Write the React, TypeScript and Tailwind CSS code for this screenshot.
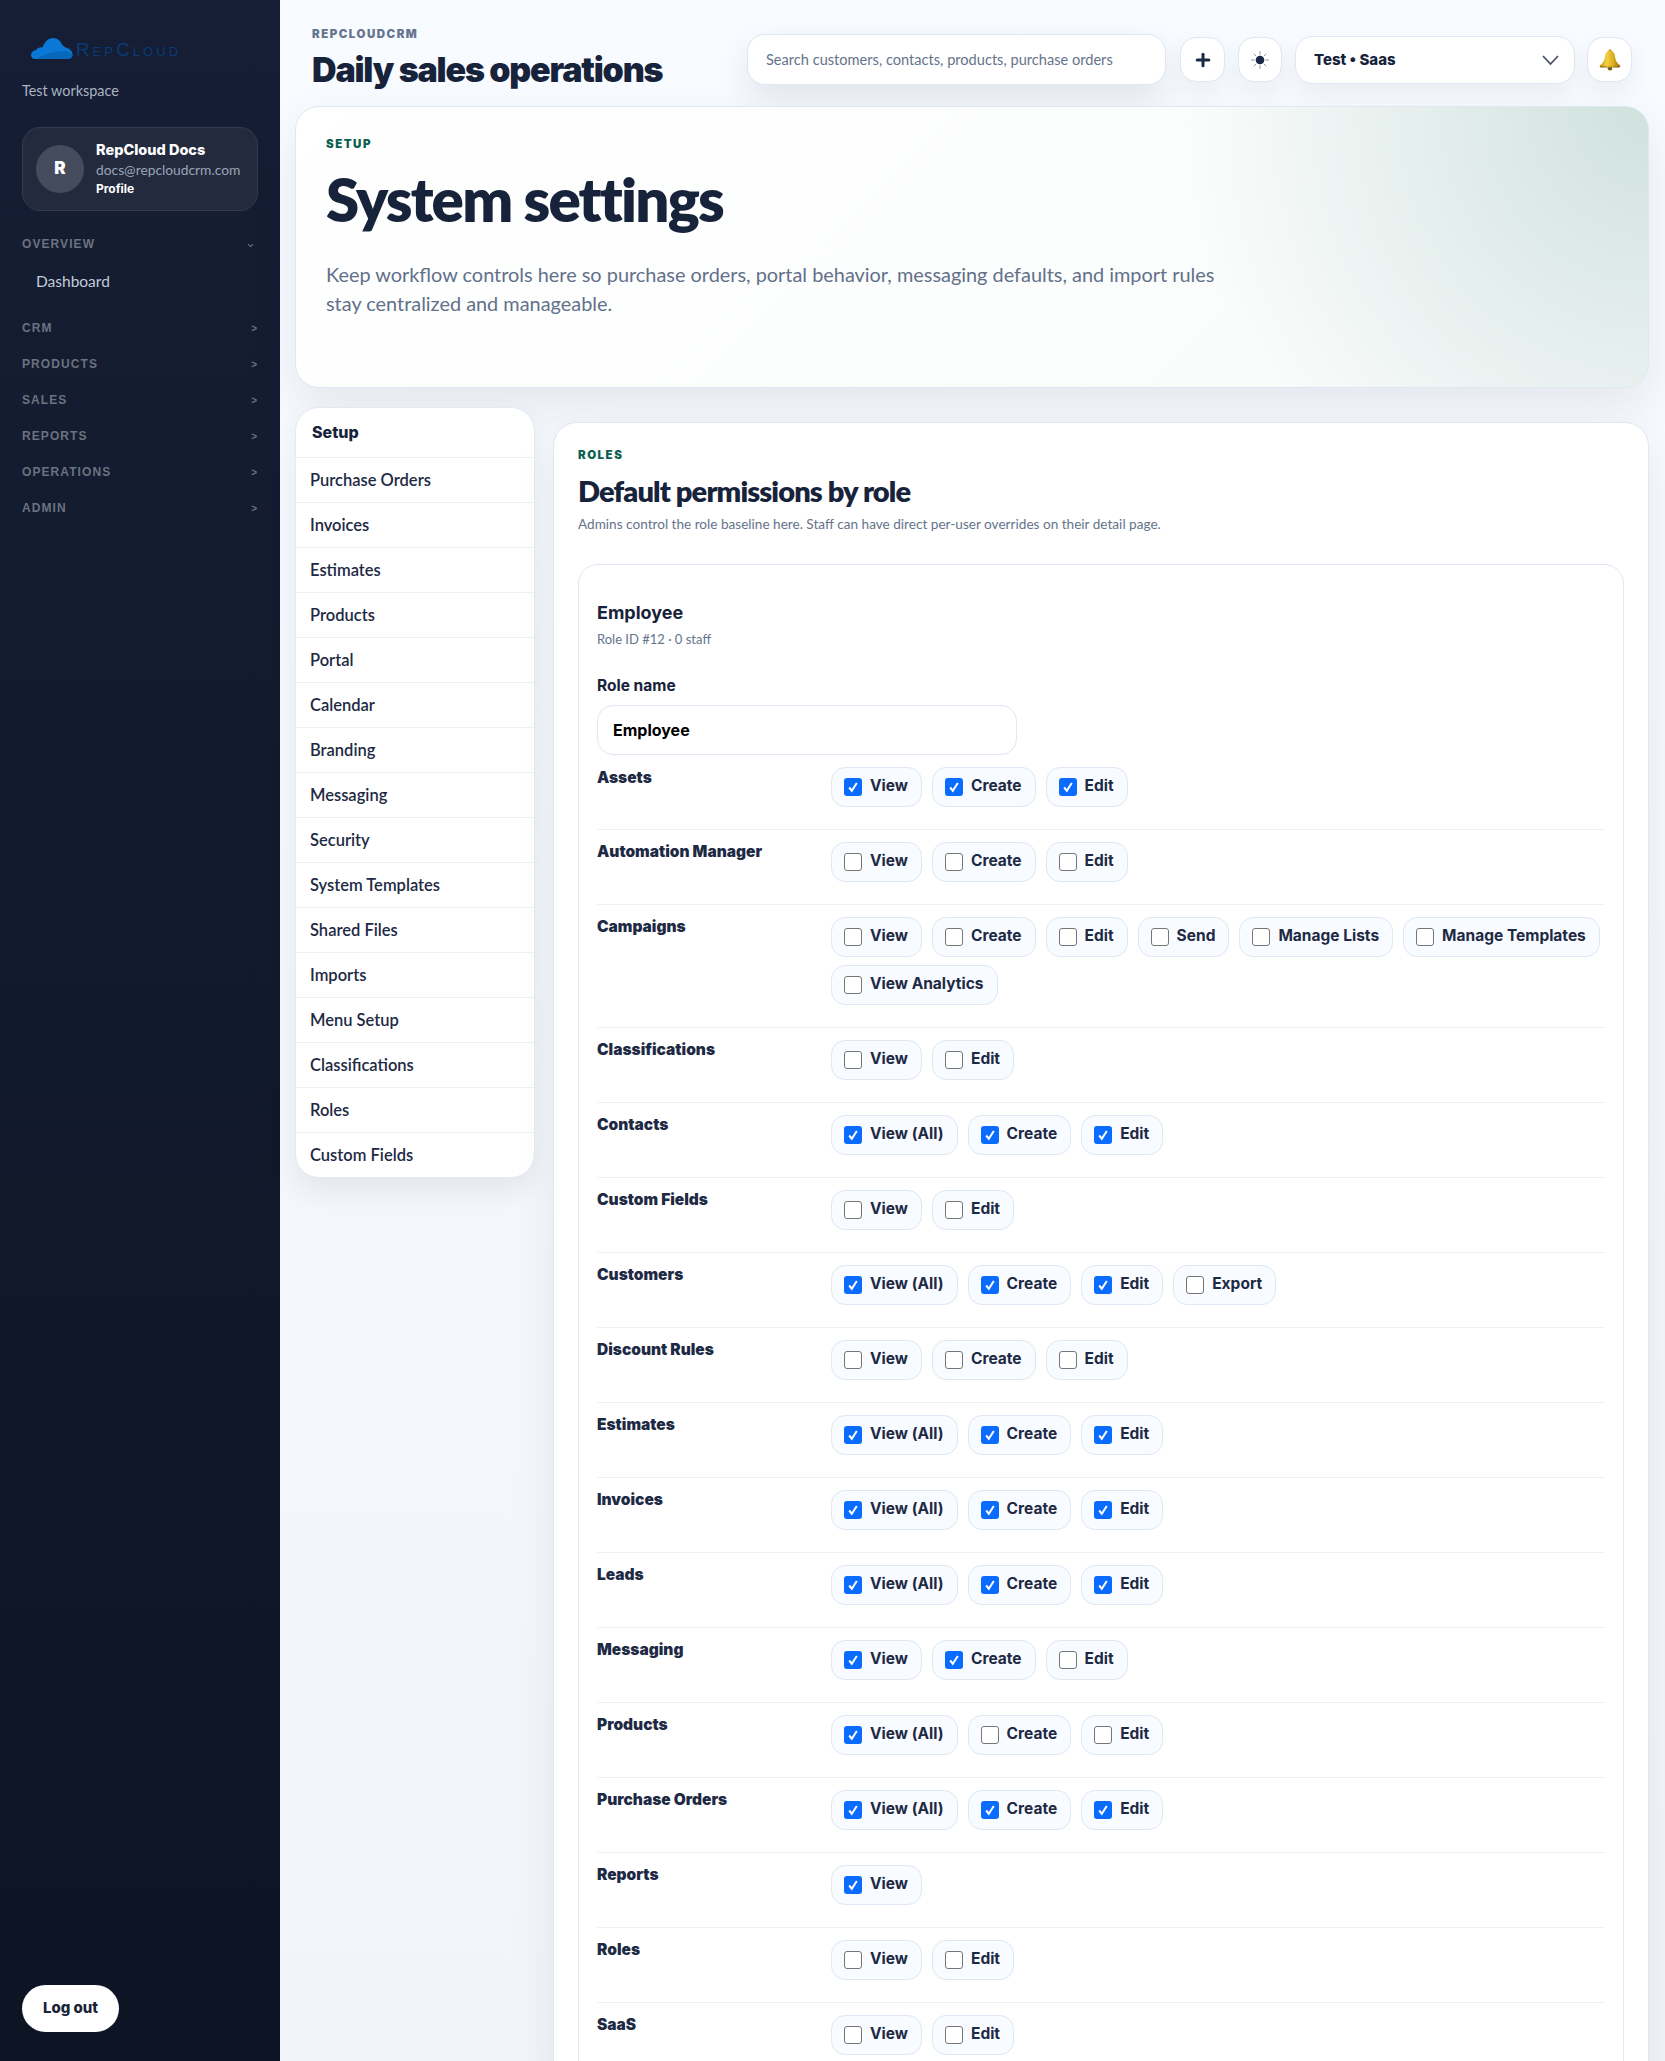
import React from "react";
import { Plus, ChevronDown } from "lucide-react";

const lato = "font-['Lato','Open_Sans',sans-serif]";
const inter = "font-['Inter','Liberation_Sans',sans-serif]";

const Cloud = () => (
  <svg width="42" height="21" viewBox="0 0 42 21" className="shrink-0">
    <path d="M4 21C1.500 21 0 19 0 17c0-2.500 2-4.500 5-5 1.500-2 4-3 6.500-2.500C13.500 4 17 0 22 0c4.500 0 8 3 9.500 7.500 1 .5 2 1 2.800 2 3.500.5 7.200 3 7.200 7 0 2.500-2 4.500-4.500 4.500z" fill="#0a78d6" />
    <path d="M6 21c6-5 16-7.500 28-8 3 .500 6 1.500 7.500 4 0 2.500-2 4-4.500 4z" fill="#0667bb" />
  </svg>
);

const Sun = () => (
  <svg width="18" height="18" viewBox="0 0 18 18" fill="none" stroke="#64748b" strokeWidth="0.8" strokeLinecap="round">
    <circle cx="9" cy="9" r="4.300" fill="#1a2a45" stroke="none" />
    <path d="M9 .6v2.600M9 14.800v2.600M.6 9h2.600M14.800 9h2.600M3 3l1.900 1.900M13.100 13.100L15 15M3 15l1.900-1.900M13.100 4.900L15 3" />
  </svg>
);

const Bell = () => (
  <svg width="22" height="22" viewBox="0 0 22 22">
    <defs>
      <linearGradient id="bellg" x1="0" x2="1" y1="0" y2="0">
        <stop offset="0" stopColor="#c99a14" />
        <stop offset="0.35" stopColor="#f3d043" />
        <stop offset="0.65" stopColor="#dcae22" />
        <stop offset="1" stopColor="#9a7209" />
      </linearGradient>
    </defs>
    <circle cx="11" cy="1.800" r="1.500" fill="#b58a10" />
    <path d="M11 1.500c3 0 4.600 2.500 5 6 .4 3.600 1.500 6.200 4.800 8.700.8.700.4 1.800-.6 1.800H1.800c-1 0-1.400-1.100-.6-1.800C4.500 13.700 5.600 11.100 6 7.500c.4-3.500 2-6 5-6z" fill="url(#bellg)" />
    <path d="M1 16.800c6 1.400 14 1.400 20 0 .5.800 0 1.700-.8 1.700H1.800c-.8 0-1.300-.9-.8-1.700z" fill="#8f6a0a" />
    <ellipse cx="11" cy="19.700" rx="2.300" ry="1.800" fill="#7a5a08" />
  </svg>
);

const Caret = () => (
  <svg width="17" height="10" viewBox="0 0 17 10" fill="none"><path d="M1 1l7.500 8L16 1" stroke="#4b5563" strokeWidth="1.800" /></svg>
);

const nav = ["Purchase Orders","Invoices","Estimates","Products","Portal","Calendar","Branding","Messaging","Security","System Templates","Shared Files","Imports","Menu Setup","Classifications","Roles","Custom Fields"];

type P = [string, boolean];
const rows: { name: string; perms: P[] }[] = [
  { name: "Assets", perms: [["View", true],["Create", true],["Edit", true]] },
  { name: "Automation Manager", perms: [["View", false],["Create", false],["Edit", false]] },
  { name: "Campaigns", perms: [["View", false],["Create", false],["Edit", false],["Send", false],["Manage Lists", false],["Manage Templates", false],["View Analytics", false]] },
  { name: "Classifications", perms: [["View", false],["Edit", false]] },
  { name: "Contacts", perms: [["View (All)", true],["Create", true],["Edit", true]] },
  { name: "Custom Fields", perms: [["View", false],["Edit", false]] },
  { name: "Customers", perms: [["View (All)", true],["Create", true],["Edit", true],["Export", false]] },
  { name: "Discount Rules", perms: [["View", false],["Create", false],["Edit", false]] },
  { name: "Estimates", perms: [["View (All)", true],["Create", true],["Edit", true]] },
  { name: "Invoices", perms: [["View (All)", true],["Create", true],["Edit", true]] },
  { name: "Leads", perms: [["View (All)", true],["Create", true],["Edit", true]] },
  { name: "Messaging", perms: [["View", true],["Create", true],["Edit", false]] },
  { name: "Products", perms: [["View (All)", true],["Create", false],["Edit", false]] },
  { name: "Purchase Orders", perms: [["View (All)", true],["Create", true],["Edit", true]] },
  { name: "Reports", perms: [["View", true]] },
  { name: "Roles", perms: [["View", false],["Edit", false]] },
  { name: "SaaS", perms: [["View", false],["Edit", false]] },
];

const Check = ({ on }: { on: boolean }) =>
  on ? (
    <span className="flex h-[18px] w-[18px] shrink-0 items-center justify-center rounded-[3px] bg-[#0a6cff]">
      <svg width="14" height="14" viewBox="0 0 14 14" fill="none"><path d="M3.200 7.500l2.600 3.200L10.800 3" stroke="#fff" strokeWidth="2" /></svg>
    </span>
  ) : (
    <span className="h-[18px] w-[18px] shrink-0 rounded-[3px] border border-[#767676] bg-white" />
  );

const Chip = ({ label, on }: { label: string; on: boolean }) => (
  <label className={`flex h-[40px] items-center gap-[8px] rounded-[14px] border border-[#dfe7f3] bg-[#f8fbff] pl-[12px] pr-[13px] text-[15.5px] font-bold text-[#1e2a44] ${inter}`}>
    <Check on={on} />
    <span className="-translate-y-px">{label}</span>
  </label>
);

const sections = ["CRM","PRODUCTS","SALES","REPORTS","OPERATIONS","ADMIN"];

export default function App() {
  return (
    <div className={`flex h-[2061px] w-[1665px] overflow-hidden bg-gradient-to-b from-[#f8fbff] to-[#f1f4f8] ${lato}`}>
      <aside className="flex w-[280px] shrink-0 flex-col bg-gradient-to-b from-[#151e34] to-[#0d1424] px-[22px] pt-[38px] pb-[29px]">
        <div className="flex items-center gap-[3px] pl-[9px]">
          <Cloud />
          <span className="translate-y-px font-['Liberation_Sans',sans-serif] text-[18.500px] leading-[21px] tracking-[0.17em] text-[#0a3a75] [font-variant:small-caps]">RepCloud</span>
        </div>
        <div className="mt-[22px] text-[14.4px] leading-[20px] text-[#a9b3c2]">Test workspace</div>
        <div className="mt-[26px] flex h-[84px] items-center gap-[12px] rounded-[18px] border border-[#343b50] bg-[#232a3e] pl-[13px]">
          <div className={`flex h-[48px] w-[48px] items-center justify-center rounded-full bg-[#454c5d] text-[17px] font-black text-white ${inter}`}>R</div>
          <div className="-translate-y-px">
            <div className={`text-[14.5px] font-extrabold leading-[21px] text-white ${inter}`}>RepCloud Docs</div>
            <div className="text-[13.8px] leading-[20px] text-[#9aa5b6]">docs@repcloudcrm.com</div>
            <div className={`text-[12px] font-bold leading-[18px] text-white ${inter}`}>Profile</div>
          </div>
        </div>
        <div className="mt-[23px] flex h-[20px] items-center justify-between font-['Liberation_Sans',sans-serif] text-[12px] font-bold tracking-[0.09em] text-[#6b7280]">
          <span>OVERVIEW</span>
          <ChevronDown size={9} strokeWidth={3} className="mr-[3px] mt-[3px]" />
        </div>
        <div className="mt-[17px] pl-[14px] text-[15.5px] leading-[20px] text-[#c3ccd9]">Dashboard</div>
        <div className="mt-[19px] flex flex-col">
          {sections.map((s) => (
            <div key={s} className="flex h-[36px] items-center justify-between font-['Liberation_Sans',sans-serif] text-[12px] font-bold tracking-[0.09em] text-[#6b7280]">
              <span>{s}</span>
              <span className="mr-[1px] text-[10px] tracking-normal">&gt;</span>
            </div>
          ))}
        </div>
        <button className={`mt-auto flex h-[47px] w-[97px] items-center justify-center rounded-full bg-white text-[15px] font-extrabold text-[#1a2438] ${inter}`}>Log out</button>
      </aside>

      <main className="relative flex min-w-0 flex-1 flex-col pl-[15px] pr-[16px]">
        <header className="flex h-[106px] shrink-0 items-start">
          <div className="pl-[17px] pt-[27px]">
            <div className={`text-[11.5px] font-black leading-[14px] tracking-[0.13em] text-[#66758f] ${inter}`}>REPCLOUDCRM</div>
            <h1 className={`mt-[8px] text-[34px] font-black leading-[42px] tracking-[-0.035em] text-[#17233a] ${inter}`}>Daily sales operations</h1>
          </div>
          <div className="ml-auto flex items-start gap-[13px] pr-[17px] pt-[34px]">
            <div className="mr-[1px] flex h-[51px] w-[419px] items-center rounded-[18px] border border-[#dfe7f3] bg-white pl-[18px] text-[14.6px] text-[#64748b] shadow-[0_14px_34px_rgba(15,23,42,0.09)]">
              Search customers, contacts, products, purchase orders
            </div>
            <div className="mt-[3px] flex h-[45px] w-[45px] items-center justify-center rounded-[16px] border border-[#dfe7f3] bg-white shadow-[0_10px_24px_rgba(15,23,42,0.06)]"><Plus size={20} strokeWidth={3.6} color="#1a2a45" /></div>
            <div className="mt-[3px] flex h-[45px] w-[44px] items-center justify-center rounded-[16px] border border-[#dfe7f3] bg-white shadow-[0_10px_24px_rgba(15,23,42,0.06)]"><Sun /></div>
            <div className="mt-[2px] -mr-[1px] flex h-[48px] w-[280px] items-center justify-between rounded-[18px] border border-[#dfe7f3] bg-white pl-[18px] pr-[15px] text-[15px] font-extrabold text-[#17233a] shadow-[0_10px_24px_rgba(15,23,42,0.06)]">
              <span className={inter}>Test • Saas</span>
              <Caret />
            </div>
            <div className="mt-[3px] flex h-[45px] w-[45px] items-center justify-center rounded-[16px] border border-[#dfe7f3] bg-white shadow-[0_10px_24px_rgba(15,23,42,0.06)]"><Bell /></div>
          </div>
        </header>

        <section className="h-[282px] shrink-0 rounded-[24px] border border-[#dfe7f3] bg-[radial-gradient(circle_at_top_right,rgba(13,105,85,0.18),transparent_34%),linear-gradient(135deg,#ffffff,#f9fbfb)] pl-[30px] pt-[29px] shadow-[0_20px_50px_rgba(15,23,42,0.08)]">
          <div className={`text-[11.5px] font-black leading-[16px] tracking-[0.13em] text-[#0d5f52] ${inter}`}>SETUP</div>
          <h2 className="mt-[12px] text-[60px] font-extrabold leading-[70px] tracking-[-0.03em] text-[#17233a]">System settings</h2>
          <p className="mt-[26px] w-[900px] text-[19.9px] leading-[29px] text-[#62708a]">Keep workflow controls here so purchase orders, portal behavior, messaging defaults, and import rules stay centralized and manageable.</p>
        </section>

        <div className="mt-[19px] flex items-start gap-[18px]">
          <nav className="w-[240px] shrink-0 overflow-hidden rounded-[24px] border border-[#e4eaf3] bg-white shadow-[0_14px_30px_rgba(15,23,42,0.07)]">
            <div className={`flex h-[49px] items-center pl-[16px] text-[16px] font-extrabold text-[#17233a] ${inter}`}><span className="-translate-y-px">Setup</span></div>
            {nav.map((n) => (
              <div key={n} className="flex h-[45px] items-center border-t border-[#edf1f6] pl-[14px] text-[16.5px] font-semibold text-[#1e2a44]">{n}</div>
            ))}
          </nav>

          <section className="mt-[15px] min-w-0 flex-1 rounded-t-[24px] border border-[#dfe7f3] bg-white px-[24px] pt-[24px] shadow-[0_18px_44px_rgba(15,23,42,0.07)]">
            <div className={`text-[11.5px] font-black leading-[16px] tracking-[0.13em] text-[#0d5f52] ${inter}`}>ROLES</div>
            <h3 className="mt-[9px] text-[29px] font-extrabold leading-[38px] tracking-[-0.03em] text-[#17233a]">Default permissions by role</h3>
            <p className="mt-[4px] text-[13.6px] leading-[20px] text-[#64748b]">Admins control the role baseline here. Staff can have direct per-user overrides on their detail page.</p>
            <div className="mt-[30px] rounded-t-[20px] border border-[#dfe7f3] px-[18px] pt-[35px]">
              <div className={`text-[18px] font-bold leading-[26px] text-[#17233a] ${inter}`}>Employee</div>
              <div className="mt-[4px] text-[13px] leading-[18px] text-[#64748b]">Role ID #12 · 0 staff</div>
              <div className={`mt-[28px] text-[15.5px] font-bold leading-[20px] text-[#17233a] ${inter}`}>Role name</div>
              <div className={`mt-[9px] flex h-[50px] w-[420px] items-center rounded-[16px] border border-[#dfe7f3] pl-[15px] text-[16px] font-bold text-black ${inter}`}>Employee</div>
              <div className="mt-[12px]">
                {rows.map((r, i) => (
                  <div key={r.name} className={`grid grid-cols-[220px_1fr] gap-[14px] pb-[22px] ${i ? "border-t border-[#edf1f6] pt-[12px]" : ""}`}>
                    <div className={`text-[15.5px] font-black leading-[20px] text-[#1e2a44] ${inter} ${i ? "" : "pt-px"}`}>{r.name}</div>
                    <div className="flex flex-wrap gap-x-[10px] gap-y-[8px]">
                      {r.perms.map(([l, on]) => <Chip key={l} label={l} on={on} />)}
                    </div>
                  </div>
                ))}
              </div>
            </div>
          </section>
        </div>
      </main>
    </div>
  );
}
